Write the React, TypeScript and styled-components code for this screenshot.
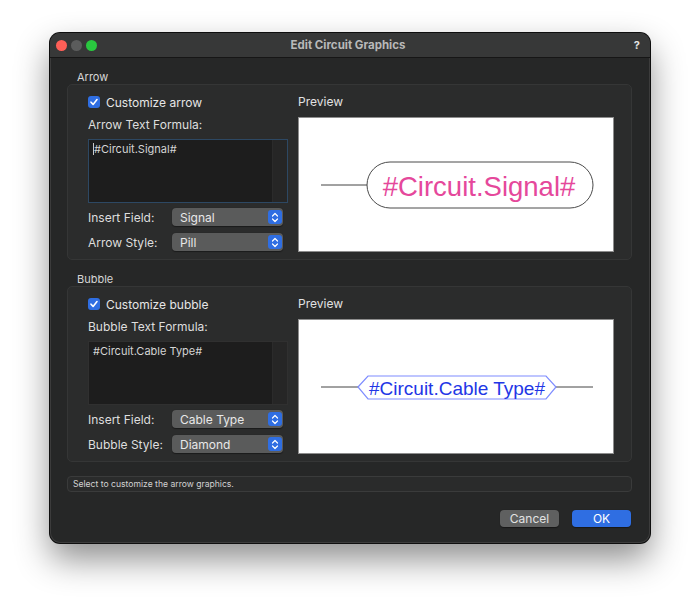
import React from 'react';
import styled, { createGlobalStyle } from 'styled-components';

const GlobalStyle = createGlobalStyle`
  html, body {
    margin: 0;
    background: #ffffff;
  }
  body {
    font-family: Inter, "Liberation Sans", sans-serif;
    -webkit-font-smoothing: antialiased;
  }
`;

const Page = styled.div`
  box-sizing: border-box;
  height: 610px;
  padding: 33px 0 0 50px;
`;

const Window = styled.div`
  width: 600px;
  height: 510px;
  border-radius: 10px;
  background: #262727;
  box-shadow: 0 0 0 1px #0e0e0e, inset 0 0 0 1px #3c3c3c,
    0 16px 34px rgba(0, 0, 0, 0.45);
  overflow: hidden;
  display: flex;
  flex-direction: column;
`;

const TitleBar = styled.div`
  height: 24px;
  flex: none;
  background: #373838;
  border-bottom: 1px solid #161616;
  display: grid;
  grid-template-columns: 1fr auto 1fr;
  align-items: center;
  padding: 0 10px 0 6px;
`;

const Lights = styled.div`
  display: flex;
  gap: 4px;
`;

const Light = styled.span<{ $color: string }>`
  width: 11px;
  height: 11px;
  border-radius: 50%;
  background: ${(p) => p.$color};
`;

const Title = styled.div`
  font-size: 11.5px;
  font-weight: 700;
  color: #b9b9b9;
`;

const Help = styled.div`
  justify-self: end;
  font-size: 11px;
  font-weight: 700;
  color: #e4e4e4;
`;

const Content = styled.div`
  display: flex;
  flex-direction: column;
  padding: 12px 18px 15px 17px;
`;

const SectionLabel = styled.div<{ $gap?: number }>`
  height: 14px;
  line-height: 14px;
  margin: ${(p) => p.$gap ?? 0}px 0 0 10px;
  font-size: 11px;
  color: #d6d6d6;
`;

const Group = styled.div`
  box-sizing: border-box;
  height: 176px;
  padding: 10px 19px 10px 20px;
  border: 1px solid #353636;
  border-radius: 5px;
  background: #2b2c2c;
  display: grid;
  grid-template-columns: 200px 316px;
  column-gap: 10px;
`;

const LeftCol = styled.div`
  display: flex;
  flex-direction: column;
`;

const CheckRow = styled.label`
  height: 14px;
  display: flex;
  align-items: center;
  gap: 6px;
  font-size: 12px;
  color: #e6e6e6;
`;

const Check = styled.span`
  width: 12px;
  height: 12px;
  border-radius: 3px;
  background: #2f6ee2;
  display: flex;
  align-items: center;
  justify-content: center;
`;

const FieldCaption = styled.div`
  height: 14px;
  line-height: 14px;
  margin-top: 9px;
  font-size: 12px;
  color: #dedede;
`;

const Formula = styled.div<{ $focused?: boolean }>`
  box-sizing: border-box;
  height: 64px;
  margin-top: 7px;
  display: flex;
  background: #1d1d1d;
  border: 1px solid ${(p) => (p.$focused ? '#2d4863' : '#303030')};
`;

const FormulaText = styled.div`
  flex: 1;
  padding: 2px 0 0 4px;
  font-size: 11px;
  line-height: 14px;
  color: #d4d4d4;
`;

const Caret = styled.span`
  display: inline-block;
  width: 1px;
  height: 12px;
  vertical-align: -2px;
  background: #c8c8c8;
`;

const ScrollTrack = styled.div`
  width: 14px;
  background: #262626;
  border-left: 1px solid #2b2b2b;
`;

const FieldRow = styled.div<{ $gap: number }>`
  height: 18px;
  margin-top: ${(p) => p.$gap}px;
  display: grid;
  grid-template-columns: 84px 111px;
  align-items: center;
  font-size: 12px;
  color: #dedede;
`;

const Popup = styled.div`
  box-sizing: border-box;
  height: 18px;
  padding: 0 1px 0 8px;
  border-radius: 4px;
  background: #5a5b5b;
  box-shadow: 0 0.5px 1px rgba(0, 0, 0, 0.4);
  display: flex;
  align-items: center;
  justify-content: space-between;
  font-size: 12px;
  color: #e8e8e8;
`;

const Stepper = styled.span`
  width: 14px;
  height: 14px;
  border-radius: 3px;
  background: #2f6ee2;
  display: flex;
  align-items: center;
  justify-content: center;
`;

const RightCol = styled.div`
  display: flex;
  flex-direction: column;
`;

const PreviewLabel = styled.div`
  height: 14px;
  line-height: 14px;
  font-size: 12px;
  color: #e2e2e2;
`;

const PreviewBox = styled.div`
  box-sizing: border-box;
  height: 135px;
  margin-top: 8px;
  background: #ffffff;
  border: 1px solid #8d8d8d;
  svg {
    display: block;
  }
`;

const StatusBar = styled.div`
  box-sizing: border-box;
  height: 16px;
  margin-top: 14px;
  padding-left: 5px;
  border: 1px solid #3a3b3b;
  border-radius: 4px;
  background: #2a2b2b;
  font-size: 8.6px;
  line-height: 14px;
  color: #d2d2d2;
`;

const ButtonRow = styled.div`
  margin-top: 18px;
  display: flex;
  justify-content: flex-end;
  gap: 13px;
  padding-right: 1px;
`;

const Button = styled.button<{ $primary?: boolean }>`
  width: 59px;
  height: 17px;
  padding: 0;
  border: none;
  border-radius: 4px;
  font-family: inherit;
  font-size: 12px;
  color: ${(p) => (p.$primary ? '#ffffff' : '#e2e2e2')};
  background: ${(p) => (p.$primary ? '#2f6ee2' : '#5f6060')};
  box-shadow: 0 0.5px 1px rgba(0, 0, 0, 0.4);
`;

const CheckMark = () => (
  <svg width="10" height="10" viewBox="0 0 10 10">
    <path d="M2 5.2 L4.1 7.4 L8 2.6" fill="none" stroke="#fff" strokeWidth="1.6" strokeLinecap="round" strokeLinejoin="round" />
  </svg>
);

const Chevrons = () => (
  <svg width="8" height="11" viewBox="0 0 8 11">
    <path d="M1.5 4 L4 1.5 L6.5 4 M1.5 7 L4 9.5 L6.5 7" fill="none" stroke="#fff" strokeWidth="1.2" strokeLinecap="round" strokeLinejoin="round" />
  </svg>
);

const PillPreview = () => (
  <svg width="314" height="133" viewBox="0 0 314 133">
    <line x1="22" y1="67" x2="68" y2="67" stroke="#444" strokeWidth="1" />
    <rect x="68" y="44" width="226" height="46" rx="23" ry="23" fill="#fff" stroke="#4a4a4a" strokeWidth="1" />
    <text x="180" y="78" textAnchor="middle" fontFamily='"Liberation Sans", Arial, sans-serif' fontSize="27.5" fill="#e5489b">
      #Circuit.Signal#
    </text>
  </svg>
);

const DiamondPreview = () => (
  <svg width="314" height="133" viewBox="0 0 314 133">
    <line x1="22" y1="67" x2="59" y2="67" stroke="#444" strokeWidth="1" />
    <line x1="257" y1="67" x2="294" y2="67" stroke="#444" strokeWidth="1" />
    <polygon points="59,67 69,56 247,56 257,67 247,79 69,79" fill="#fff" stroke="#7e8cff" strokeWidth="1.2" />
    <text x="158" y="74.5" textAnchor="middle" fontFamily='"Liberation Sans", Arial, sans-serif' fontSize="19" fill="#2236e6">
      #Circuit.Cable Type#
    </text>
  </svg>
);

interface SectionProps {
  checkLabel: string;
  formulaLabel: string;
  formula: string;
  focused?: boolean;
  field: string;
  styleLabel: string;
  styleValue: string;
  preview: React.ReactNode;
}

const Section = ({ checkLabel, formulaLabel, formula, focused, field, styleLabel, styleValue, preview }: SectionProps) => (
  <Group>
    <LeftCol>
      <CheckRow>
        <Check>
          <CheckMark />
        </Check>
        {checkLabel}
      </CheckRow>
      <FieldCaption>{formulaLabel}</FieldCaption>
      <Formula $focused={focused}>
        <FormulaText>
          {focused && <Caret />}
          {formula}
        </FormulaText>
        <ScrollTrack />
      </Formula>
      <FieldRow $gap={5}>
        <span>Insert Field:</span>
        <Popup>
          {field}
          <Stepper>
            <Chevrons />
          </Stepper>
        </Popup>
      </FieldRow>
      <FieldRow $gap={7}>
        <span>{styleLabel}</span>
        <Popup>
          {styleValue}
          <Stepper>
            <Chevrons />
          </Stepper>
        </Popup>
      </FieldRow>
    </LeftCol>
    <RightCol>
      <PreviewLabel>Preview</PreviewLabel>
      <PreviewBox>{preview}</PreviewBox>
    </RightCol>
  </Group>
);

export default function App() {
  return (
    <Page>
      <GlobalStyle />
      <Window>
        <TitleBar>
          <Lights>
            <Light $color="#fe5f57" />
            <Light $color="#5b5c5c" />
            <Light $color="#29c73f" />
          </Lights>
          <Title>Edit Circuit Graphics</Title>
          <Help>?</Help>
        </TitleBar>
        <Content>
          <SectionLabel>Arrow</SectionLabel>
          <Section
            checkLabel="Customize arrow"
            formulaLabel="Arrow Text Formula:"
            formula="#Circuit.Signal#"
            focused
            field="Signal"
            styleLabel="Arrow Style:"
            styleValue="Pill"
            preview={<PillPreview />}
          />
          <SectionLabel $gap={12}>Bubble</SectionLabel>
          <Section
            checkLabel="Customize bubble"
            formulaLabel="Bubble Text Formula:"
            formula="#Circuit.Cable Type#"
            field="Cable Type"
            styleLabel="Bubble Style:"
            styleValue="Diamond"
            preview={<DiamondPreview />}
          />
          <StatusBar>Select to customize the arrow graphics.</StatusBar>
          <ButtonRow>
            <Button>Cancel</Button>
            <Button $primary>OK</Button>
          </ButtonRow>
        </Content>
      </Window>
    </Page>
  );
}
